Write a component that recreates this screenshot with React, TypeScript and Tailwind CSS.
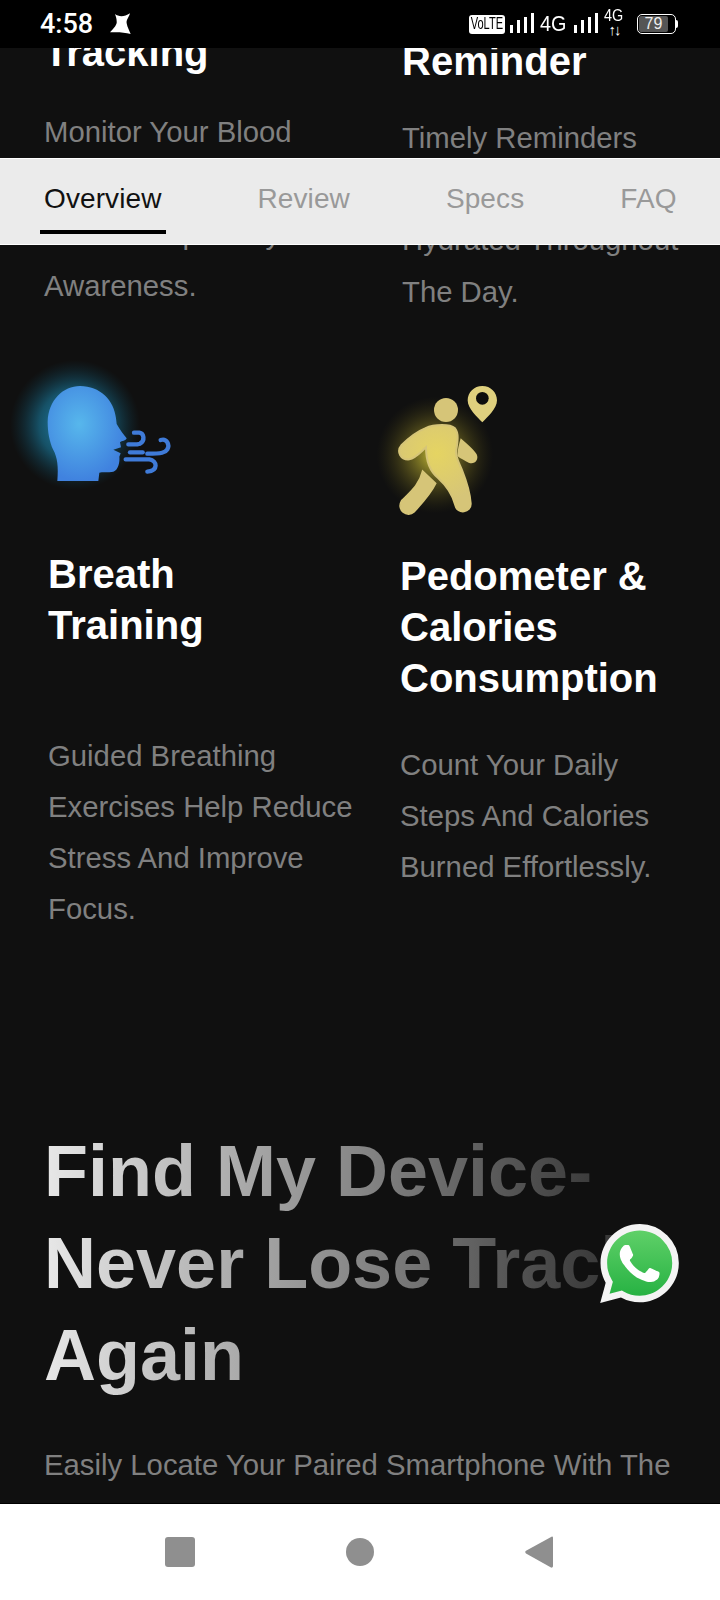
import type { ReactNode } from 'react'

function HeadIcon() {
  return (
    <svg viewBox="0 0 600 450" className="block w-[200px] h-[150px]">
      <defs>
        <radialGradient id="headGlow">
          <stop offset="0%" stopColor="#2ba8df" stopOpacity="0.9" />
          <stop offset="55%" stopColor="#1b86ad" stopOpacity="0.55" />
          <stop offset="100%" stopColor="#0f4e66" stopOpacity="0" />
        </radialGradient>
        <radialGradient id="headFill" cx="0.4" cy="0.4" r="0.6">
          <stop offset="0%" stopColor="#57b7ec" />
          <stop offset="100%" stopColor="#4082df" />
        </radialGradient>
      </defs>
      <circle cx="225" cy="225" r="195" fill="url(#headGlow)" />
      <path
        d="M172 393C176 350 172 322 160 300C148 275 143 245 143 215C145 150 190 108 240 108C300 108 342 150 348 205L350 222C360 240 372 255 380 265C378 273 365 272 360 277L363 292L340 299L362 310L358 320C360 335 355 360 340 365C325 368 305 365 298 368L295 393Z"
        fill="url(#headFill)"
      />
      <g fill="none" stroke="#3f7bd8" strokeWidth="13" strokeLinecap="round">
        <path d="M402 248L418 248C432 250 436 272 420 281C412 284 400 283 385 283" />
        <path d="M390 307L428 307" />
        <path d="M482 270C500 264 510 284 502 298C496 308 486 311 442 311" />
        <path d="M377 328L448 328C472 332 476 362 442 365" />
      </g>
    </svg>
  )
}

function WalkerIcon() {
  return (
    <svg viewBox="0 0 480 480" className="block w-[160px] h-[160px]">
      <defs>
        <radialGradient id="walkGlow">
          <stop offset="0%" stopColor="#e8dc3c" stopOpacity="0.85" />
          <stop offset="55%" stopColor="#8f8424" stopOpacity="0.4" />
          <stop offset="100%" stopColor="#4b4512" stopOpacity="0" />
        </radialGradient>
        <radialGradient id="walkFill" gradientUnits="userSpaceOnUse" cx="200" cy="280" r="150">
          <stop offset="0%" stopColor="#e5d462" />
          <stop offset="100%" stopColor="#d6c578" />
        </radialGradient>
      </defs>
      <circle cx="195" cy="285" r="175" fill="url(#walkGlow)" />
      <circle cx="228" cy="150" r="36" fill="#d6c578" />
      <path
        d="M337 78C312 78 293 97 293 121C293 146 322 172 337 187C352 172 381 146 381 121C381 97 362 78 337 78Z"
        fill="#dfd07e"
      />
      <circle cx="337" cy="115" r="19" fill="#0d0d0d" />
      <path
        d="M165 205C195 192 240 192 255 205C268 220 262 250 258 275C258 295 268 310 276 330C290 365 300 400 302 430C304 458 262 464 256 436C248 405 235 382 205 355C180 335 168 305 168 262C150 278 135 295 118 298C92 300 78 275 95 255C115 235 140 215 165 205Z"
        fill="url(#walkFill)"
        stroke="#d6c578"
        strokeWidth="6"
      />
      <path
        d="M272 235C290 250 310 268 320 283C328 300 312 316 296 308C285 302 272 296 262 288C262 270 268 250 272 235Z"
        fill="#d6c578"
      />
      <path
        d="M158 333L197 370C185 395 165 420 132 456C112 474 78 450 95 422C122 395 148 375 158 333Z"
        fill="#d6c578"
        stroke="#d6c578"
        strokeWidth="5"
      />
    </svg>
  )
}

function WhatsApp() {
  return (
    <svg viewBox="0 0 24 24" className="absolute left-[600px] top-[1176px] w-[79px] h-[79px]">
      <defs>
        <linearGradient id="waGreen" x1="0" y1="0" x2="0" y2="1">
          <stop offset="0%" stopColor="#5fd068" />
          <stop offset="100%" stopColor="#27b243" />
        </linearGradient>
      </defs>
      <path
        d="M20.464 3.488A11.815 11.815 0 0012.05 0C5.495 0 .16 5.335.157 11.892c0 2.096.547 4.142 1.588 5.945L.057 24l6.305-1.654a11.882 11.882 0 005.683 1.448h.005c6.554 0 11.89-5.335 11.893-11.893a11.821 11.821 0 00-3.48-8.413z"
        fill="#f4f4f4"
      />
      <path
        d="M12.051 21.785h-.004a9.87 9.87 0 01-5.031-1.378l-.361-.214-3.741.982.998-3.648-.235-.374a9.86 9.86 0 01-1.51-5.26c.001-5.45 4.436-9.884 9.888-9.884 2.64 0 5.122 1.03 6.988 2.898a9.825 9.825 0 012.893 6.994c-.003 5.45-4.437 9.884-9.885 9.884"
        fill="url(#waGreen)"
      />
      <path
        d="M17.472 14.382c-.297-.149-1.758-.867-2.03-.967-.273-.099-.471-.148-.67.15-.197.297-.767.966-.94 1.164-.173.199-.347.223-.644.075-.297-.15-1.255-.463-2.39-1.475-.883-.788-1.48-1.761-1.653-2.059-.173-.297-.018-.458.13-.606.134-.133.298-.347.446-.52.149-.174.198-.298.298-.497.099-.198.05-.371-.025-.52-.075-.149-.669-1.612-.916-2.207-.242-.579-.487-.5-.669-.51-.173-.008-.371-.01-.57-.01-.198 0-.52.074-.792.372-.272.297-1.04 1.016-1.04 2.479 0 1.462 1.065 2.875 1.213 3.074.149.198 2.096 3.2 5.077 4.487.709.306 1.262.489 1.694.625.712.227 1.36.195 1.871.118.571-.085 1.758-.719 2.006-1.413.248-.694.248-1.289.173-1.413-.074-.124-.272-.198-.57-.347"
        fill="#ffffff"
      />
    </svg>
  )
}

function SignalBars() {
  return (
    <div className="flex items-end gap-[4px] h-[20px] shrink-0">
      <div className="w-[3px] h-[8px] bg-white" />
      <div className="w-[3px] h-[13px] bg-white" />
      <div className="w-[3px] h-[16px] bg-white" />
      <div className="w-[3px] h-[20px] bg-white" />
    </div>
  )
}

function StatusBar() {
  return (
    <div className="h-12 bg-black text-white flex items-center shrink-0 pl-[40px]">
      <span className="font-['Roboto',sans-serif] font-medium text-[27px] leading-none w-[60px] shrink-0">4:58</span>
      <svg viewBox="0 0 120 120" className="w-[40px] h-[40px] shrink-0">
        <path
          d="M45 30C55 38 72 40 90 28C86 42 78 48 80 58C82 70 88 80 92 90C72 84 50 84 30 85C42 72 52 62 50 52C50 44 48 38 45 30Z"
          fill="#fff"
        />
      </svg>
      <div className="ml-[329px] w-[36px] h-[19px] bg-white rounded-[3px] flex items-center justify-center text-black text-[17px] overflow-hidden shrink-0">
        <span className="scale-x-[0.65] whitespace-nowrap">VoLTE</span>
      </div>
      <div className="ml-[5px] -mt-[3px]">
        <SignalBars />
      </div>
      <span className="ml-[6px] text-[22px] leading-none w-[34px] shrink-0 -mt-[1px]">
        <span className="block origin-left scale-x-90">4G</span>
      </span>
      <div className="-mt-[3px]">
        <SignalBars />
      </div>
      <div className="ml-[6px] w-[20px] shrink-0 flex flex-col items-center -mt-[4px]">
        <span className="text-[16px] leading-[15px] scale-x-90">4G</span>
        <span className="text-[15px] leading-[13px] font-bold tracking-[-2px]">↑↓</span>
      </div>
      <div className="ml-[13px] w-[39px] h-[20px] rounded-[5px] border-[1.5px] border-white p-[1px] shrink-0 flex">
        <div className="w-[29px] h-full bg-[#555] rounded-[2px] flex items-center justify-center text-[16px] leading-none text-[#eee]">79</div>
      </div>
      <div className="w-[2px] h-[8px] bg-white rounded-r-sm shrink-0" />
    </div>
  )
}

function TabBar() {
  const tabs = ['Overview', 'Review', 'Specs', 'FAQ']
  return (
    <div className="absolute left-0 right-0 top-[110px] h-[87px] bg-[#ebebeb] border-y border-white flex pl-[40px] gap-[88px]">
      {tabs.map((tab, i) => (
        <div
          key={tab}
          className={
            i === 0
              ? 'h-[75px] px-1 pt-[9px] flex items-center text-[28px] text-[#111] border-b-4 border-black tracking-[0.1px]'
              : 'h-[75px] px-1 pt-[9px] flex items-center text-[28px] text-[#999] border-b-4 border-transparent tracking-[0.1px]'
          }
        >
          {tab}
        </div>
      ))}
    </div>
  )
}

function Feature({
  title,
  body,
  icon,
  className,
  titleClass,
  bodyClass,
}: {
  title: string[]
  body: string[]
  icon?: ReactNode
  className: string
  titleClass: string
  bodyClass: string
}) {
  return (
    <div className={className}>
      {icon}
      <h3 className={titleClass}>
        {title.map((line) => (
          <div key={line}>{line}</div>
        ))}
      </h3>
      <div className={bodyClass}>
        {body.map((line) => (
          <div key={line}>{line}</div>
        ))}
      </div>
    </div>
  )
}

const headingBase = 'text-[40px] leading-[51px] font-bold text-white'
const bodyBase = 'text-[29.3px] leading-[51.2px] text-[#808080] whitespace-nowrap'

export default function App() {
  return (
    <div className="h-[1600px] w-[720px] flex flex-col overflow-hidden bg-[#101010] font-['Liberation_Sans',Arial,sans-serif]">
      <StatusBar />

      <main className="relative flex-1 overflow-hidden bg-[#101010]">
        <div className="-mt-[23px]">
          {/* Features */}
          <div className="grid grid-cols-[370px_350px]">
            <Feature
              className="pt-[2px] pl-[44px]"
              title={['Tracking']}
              body={['Monitor Your Blood', 'Oxygen Levels For', 'Better Respiratory', 'Awareness.']}
              titleClass={headingBase}
              bodyClass={`mt-[28px] ${bodyBase}`}
            />
            <Feature
              className="mt-[11px] pl-[32px]"
              title={['Reminder']}
              body={['Timely Reminders', 'To Keep You', 'Hydrated Throughout', 'The Day.']}
              titleClass={headingBase}
              bodyClass={`mt-[25px] ${bodyBase}`}
            />
            <Feature
              className="mt-[33px]"
              icon={<HeadIcon />}
              title={['Breath', 'Training']}
              body={['Guided Breathing', 'Exercises Help Reduce', 'Stress And Improve', 'Focus.']}
              titleClass={`mt-[49px] pl-[48px] ${headingBase}`}
              bodyClass={`mt-[79px] pl-[48px] ${bodyBase}`}
            />
            <Feature
              className="mt-[43px]"
              icon={<WalkerIcon />}
              title={['Pedometer &', 'Calories', 'Consumption']}
              body={['Count Your Daily', 'Steps And Calories', 'Burned Effortlessly.']}
              titleClass={`mt-[31px] pl-[30px] ${headingBase}`}
              bodyClass={`mt-[35px] pl-[30px] ${bodyBase}`}
            />
          </div>

          {/* Find my device */}
          <h2 className="mt-[190px] ml-[44px] w-[640px] text-[72px] leading-[92px] font-bold text-transparent bg-clip-text bg-gradient-to-r from-[#e8e8e8] via-[#858585] to-[#222]">
            Find My Device-
            <br />
            Never Lose Track
            <br />
            Again
          </h2>
          <p className={`mt-[38px] ml-[44px] ${bodyBase}`}>Easily Locate Your Paired Smartphone With The</p>
        </div>

        <TabBar />
        <WhatsApp />
      </main>

      <div className="h-[97px] bg-white border-t border-black shrink-0 flex items-center pl-[165px] gap-[151px]">
        <div className="w-[30px] h-[30px] rounded-[3px] bg-[#8f8f8f]" />
        <div className="w-[28px] h-[28px] rounded-full bg-[#8f8f8f]" />
        <svg viewBox="0 0 28 32" className="w-[28px] h-[32px]">
          <path d="M27 0.500C27.700 0.500 28 1 28 2V30C28 31 27.300 32 26 31.500L1 17.500C0 16.800 0 15.500 1 14.800Z" fill="#8f8f8f" />
        </svg>
      </div>
    </div>
  )
}
